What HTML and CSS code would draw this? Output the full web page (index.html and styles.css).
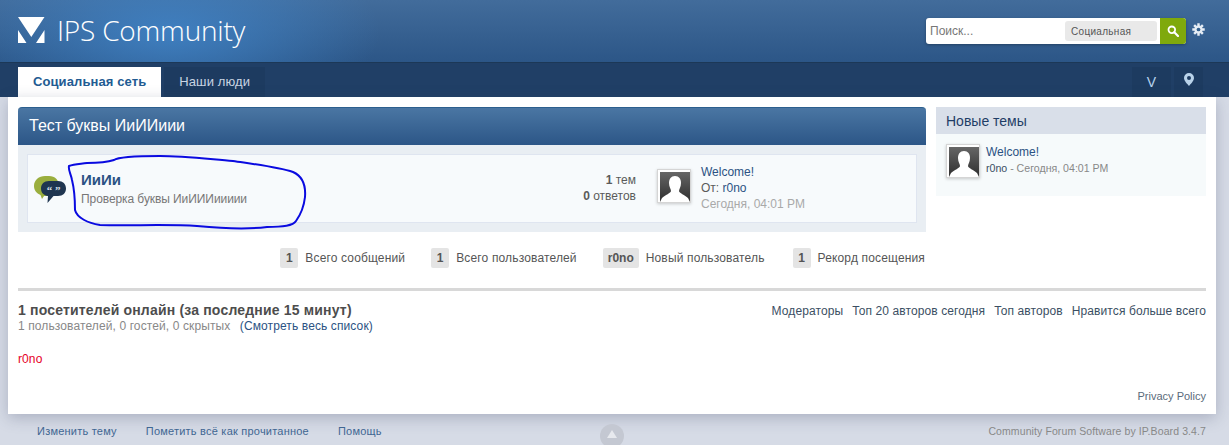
FILE: index.html
```html
<!DOCTYPE html>
<html lang="ru">
<head>
<meta charset="utf-8">
<title>IPS Community</title>
<link rel="stylesheet" href="styles.css">
</head>
<body>
<header class="branding">
  <div class="logo">
    <svg class="logo-mark" width="27" height="26" viewBox="0 0 27 26"><path fill="#fff" d="M0 0H26.500L13.300 20ZM0 13L8.500 26H0ZM26.500 13V26H18Z"/></svg>
    <span class="logo-text">IPS Community</span>
  </div>
  <div class="search-wrap">
    <div class="search">
      <span class="search-input">Поиск...</span>
      <span class="search-scope">Социальная</span>
      <span class="search-btn">
        <svg width="12" height="12" viewBox="0 0 12 12"><circle cx="4.800" cy="4.800" r="3.300" fill="none" stroke="#fff" stroke-width="1.800"/><path d="M7.300 7.300L11 11" stroke="#fff" stroke-width="2.200" stroke-linecap="round"/></svg>
      </span>
    </div>
    <svg class="gear" width="13" height="13" viewBox="0 0 14 14"><circle cx="7" cy="7" r="4.300" fill="#e6edf5"/><path d="M7 .3V13.700M.3 7H13.700M2.300 2.300L11.700 11.700M11.700 2.300L2.300 11.700" stroke="#e6edf5" stroke-width="2.600"/><circle cx="7" cy="7" r="2" fill="#32608f"/></svg>
  </div>
</header>
<nav class="primary-nav">
  <div class="tabs">
    <a class="tab tab-active">Социальная сеть</a>
    <a class="tab">Наши люди</a>
  </div>
  <div class="user-tools">
    <span class="tool tool-user">V</span>
    <span class="tool tool-pin">
      <svg width="10" height="13" viewBox="0 0 10 13"><path fill="#b9d3ea" fill-rule="evenodd" d="M5 0A5 5 0 0 1 10 5C10 8 6.500 11 5 13C3.500 11 0 8 0 5A5 5 0 0 1 5 0ZM5 3A2 2 0 1 0 5 7A2 2 0 1 0 5 3Z"/></svg>
    </span>
  </div>
</nav>
<main class="content">
  <div class="columns">
    <section class="forums">
      <h2 class="cat-title">Тест буквы ИиИИиии</h2>
      <div class="cat-body">
        <div class="forum-row">
          <svg class="forum-icon" width="32" height="28" viewBox="0 0 32 28">
            <path fill="#9aae3e" d="M11 0H15C21 0 25 4 25 10C25 16 21 20 15 20H10L8 23L6.500 19C2.500 17.500 0 14 0 10C0 4 5 0 11 0Z"/>
            <path fill="#1f3550" d="M15 5H24C29 5 32 8 32 12.500C32 17 29 20 24 20H19.500L13.500 27L14 20C10 19.500 7 17 7 12.500C7 8 10 5 15 5Z"/>
            <text class="quote-glyph" x="19.500" y="18" text-anchor="middle">“ ”</text>
          </svg>
          <div class="forum-info">
            <a class="forum-name">ИиИи</a>
            <span class="forum-desc">Проверка буквы ИиИИИиииии</span>
          </div>
          <ul class="forum-stats">
            <li><b>1</b> тем</li>
            <li><b>0</b> ответов</li>
          </ul>
          <span class="avatar avatar-last">
            <svg width="30" height="30" viewBox="0 0 30 30"><use href="#silhouette"/></svg>
          </span>
          <div class="last-post">
            <a class="link">Welcome!</a>
            <span>От: <a class="link">r0no</a></span>
            <span class="muted">Сегодня, 04:01 PM</span>
          </div>
        </div>
      </div>
      <svg class="scribble" width="240" height="76" viewBox="0 0 240 76">
        <path fill="none" stroke="#0a0ae0" stroke-width="2" stroke-linecap="round" d="M1 10C6 8 12 8 19 7C30 7 40 6 46 4C50 1 70 0 92 0C115 0 140 3 165 5C185 8 210 11 225 16C234 20 238 28 237 41C236 50 233 58 228 65C225 70 215 71 199 71C175 74 150 72 129 70C100 68 60 70 32 69C20 67 9 62 7 54C7 44 6 32 4 24C3 18 0 14 1 10Z"/>
      </svg>
    </section>
    <aside class="sidebar">
      <h3 class="side-title">Новые темы</h3>
      <div class="side-body">
        <span class="avatar">
          <svg width="30" height="30" viewBox="0 0 30 30">
            <defs>
              <linearGradient id="ava" x1="0" y1="0" x2="0" y2="1"><stop offset="0" stop-color="#666"/><stop offset="1" stop-color="#2e2e2e"/></linearGradient>
              <g id="silhouette">
                <rect width="30" height="30" fill="url(#ava)"/>
                <path fill="#fff" d="M15 4C19 4 21 7 21 11C21 15 19 17 19 19C19 21 25 23 28 26L30 30H0L2 26C5 23 11 21 11 19C11 17 9 15 9 11C9 7 11 4 15 4Z"/>
              </g>
            </defs>
            <use href="#silhouette"/>
          </svg>
        </span>
        <div class="side-post">
          <a class="link side-link">Welcome!</a>
          <span class="side-meta"><a class="dark-link">r0no</a> - Сегодня, 04:01 PM</span>
        </div>
      </div>
    </aside>
  </div>
  <ul class="stats">
    <li><b class="badge">1</b>Всего сообщений</li>
    <li><b class="badge">1</b>Всего пользователей</li>
    <li><b class="badge">r0no</b>Новый пользователь</li>
    <li><b class="badge">1</b>Рекорд посещения</li>
  </ul>
  <div class="online">
    <div class="online-main">
      <h4 class="online-title">1 посетителей онлайн (за последние 15 минут)</h4>
      <p class="online-sub">1 пользователей, 0 гостей, 0 скрытых <a class="link online-all">(Смотреть весь список)</a></p>
    </div>
    <div class="online-links">
      <a class="dark-link">Модераторы</a>
      <a class="dark-link">Топ 20 авторов сегодня</a>
      <a class="dark-link">Топ авторов</a>
      <a class="dark-link">Нравится больше всего</a>
    </div>
  </div>
  <p class="online-user">r0no</p>
  <p class="privacy">Privacy Policy</p>
</main>
<footer class="page-foot">
  <div class="foot-links">
    <a>Изменить тему</a>
    <a>Пометить всё как прочитанное</a>
    <a>Помощь</a>
  </div>
  <span class="top-btn"></span>
  <span class="copyright">Community Forum Software by IP.Board 3.4.7</span>
</footer>
</body>
</html>
```

FILE: styles.css
```css
* { box-sizing: border-box; }
html, body { height: 445px; overflow: hidden; }
body {
  margin: 0;
  background: #d6dbe6;
  color: #5a5a5a;
  font: 12px/16px "Liberation Sans", Arial, sans-serif;
}
a { text-decoration: none; }
h2, h3, h4, p, ul { margin: 0; padding: 0; list-style: none; font-weight: normal; }

.branding {
  height: 63px;
  padding: 0 24px 0 18px;
  display: flex;
  justify-content: space-between;
  background:
    radial-gradient(ellipse 210px 90px at 170px 32px, rgba(64,132,200,.85), rgba(64,132,200,0) 100%),
    linear-gradient(#426c9b, #2c5687);
  border-bottom: 1px solid #1c3857;
}
.logo { display: flex; align-items: center; height: 62px; }
.logo-mark { margin-bottom: 3px; }
.logo-text {
  margin-left: 12px;
  color: #fff;
  font: 300 28px/34px "Open Sans", sans-serif;
  letter-spacing: -.2px;
  padding-bottom: 2px;
}
.search-wrap { display: flex; align-items: flex-start; padding-top: 18px; }
.search {
  width: 260px;
  height: 26px;
  display: flex;
  align-items: center;
  background: #fff;
  border-radius: 3px;
  box-shadow: 0 1px 3px rgba(0,0,0,.3);
}
.search-input { flex: 1; padding-left: 4px; color: #777; font-size: 12px; }
.search-scope {
  width: 92px;
  height: 20px;
  margin-right: 3px;
  padding-left: 6px;
  background: #e9e9e9;
  border-radius: 3px;
  color: #555;
  font-size: 10px;
  letter-spacing: .3px;
  line-height: 21px;
}
.search-btn {
  width: 26px;
  height: 26px;
  display: flex;
  align-items: center;
  justify-content: center;
  background: #7fa90c;
  border-radius: 0 3px 3px 0;
}
.gear { margin: 5px 0 0 6px; }

.primary-nav {
  height: 34px;
  padding: 4px 26px 0 18px;
  display: flex;
  justify-content: space-between;
  background: #203f66;
}
.tabs, .user-tools { display: flex; }
.tab {
  height: 30px;
  padding: 0 14px;
  color: #c9d5e3;
  font-size: 13px;
  line-height: 29px;
  background: #1d3b60;
}
.tabs .tab + .tab { margin-left: 3px; padding: 0 15px; letter-spacing: .12px; }
.tab-active {
  padding: 0 15px;
  background: #fff;
  color: #225b92;
  font-weight: bold;
  letter-spacing: .1px;
}
.user-tools { gap: 3px; }
.tool {
  height: 30px;
  display: flex;
  align-items: center;
  justify-content: center;
  background: #1d3b60;
}
.tool-user { width: 39px; color: #b5d3ee; font-size: 14px; }
.tool-pin { width: 29px; padding-bottom: 6px; }

.content {
  position: relative;
  width: 1208px;
  height: 317px;
  margin-left: 8px;
  padding: 10px 10px 0;
  background: #fff;
  box-shadow: 0 4px 14px rgba(60,70,100,.28);
}
.columns { display: flex; gap: 10px; align-items: flex-start; }
.forums { position: relative; width: 908px; }
.cat-title {
  height: 38px;
  padding-left: 11px;
  color: #fff;
  font-size: 16px;
  line-height: 36px;
  background: linear-gradient(#4a76a3, #2c5687);
  border-top: 1px solid #2c5f8e;
  border-radius: 4px 4px 0 0;
}
.cat-body { height: 87px; padding: 9px; background: #e9eef3; }
.forum-row {
  height: 69px;
  padding: 0 0 0 6px;
  display: flex;
  align-items: center;
  background: #f7fafc;
  border: 1px solid #dfe5f0;
}
.forum-icon { flex: none; margin-top: 2px; }
.quote-glyph { fill: #d8e0ea; font: bold 11px "Liberation Serif", serif; }
.forum-info { width: 498px; margin-left: 15px; display: flex; flex-direction: column; padding-top: 1px; }
.forum-name { color: #2b5283; font-size: 15px; font-weight: bold; line-height: 18px; }
.forum-desc { margin-top: 2px; color: #777; line-height: 16px; letter-spacing: -.08px; }
.forum-stats { width: 57px; text-align: right; line-height: 16px; padding-bottom: 2px; }
.forum-stats li { white-space: nowrap; }
.avatar {
  flex: none;
  width: 34px;
  height: 34px;
  padding: 2px;
  background: #fff;
  border: 1px solid #d5d5d5;
  box-shadow: 0 1px 3px rgba(0,0,0,.2);
}
.avatar svg { display: block; }
.avatar-last { margin: 0 10px 6px 21px; }
.last-post { display: flex; flex-direction: column; line-height: 16px; padding-bottom: 2px; }
.link { color: #2b5283; }
.muted { color: #a9a9a9; }
.scribble { position: absolute; left: 50px; top: 49px; overflow: visible; pointer-events: none; }

.sidebar { width: 270px; }
.side-title {
  height: 27px;
  padding-left: 10px;
  color: #1f3d66;
  font-size: 14px;
  line-height: 29px;
  background: #d9dfe9;
}
.side-body {
  height: 62px;
  padding: 10px;
  display: flex;
  background: #f6fafb;
}
.side-post { margin-left: 6px; display: flex; flex-direction: column; }
.side-link { line-height: 16px; }
.side-meta { color: #888; font-size: 10.600px; line-height: 16px; }

.stats {
  width: 907px;
  margin-top: 16px;
  display: flex;
  justify-content: flex-end;
  gap: 26px;
  color: #555;
  line-height: 20px;
  letter-spacing: .15px;
}
.stats li { display: flex; white-space: nowrap; }
.stats li:last-child { margin-left: 2px; }
.badge {
  height: 20px;
  min-width: 18px;
  margin-right: 7px;
  padding: 0 5px;
  background: #e4e4e4;
  border-radius: 2px;
  text-align: center;
  letter-spacing: 0;
}
.online {
  margin-top: 20px;
  padding-top: 11px;
  border-top: 3px solid #d8d8d8;
  display: flex;
  justify-content: space-between;
}
.online-title { color: #4d4d4d; font-size: 14px; font-weight: bold; line-height: 16px; letter-spacing: .18px; }
.online-sub { color: #888; line-height: 16px; letter-spacing: .11px; }
.online-all { margin-left: 6px; }
.online-links { display: flex; gap: 9px; padding-top: 1px; letter-spacing: .1px; }
.dark-link { color: #3b4f63; }
.online-user { margin-top: 17px; color: #e6001f; line-height: 16px; letter-spacing: .1px; }
.privacy {
  margin-top: 21px;
  color: #5a6a7a;
  font-size: 11px;
  text-align: right;
}

.page-foot {
  position: relative;
  height: 31px;
  padding: 9px 23px 0 37px;
  display: flex;
  justify-content: space-between;
  font-size: 11px;
  letter-spacing: .22px;
}
.foot-links { display: flex; gap: 29px; }
.foot-links a { color: #3f6692; }
.copyright { color: #888; font-size: 10.500px; letter-spacing: .1px; }
.top-btn {
  position: absolute;
  left: 600px;
  top: 10px;
  width: 24px;
  height: 24px;
  border-radius: 50%;
  background: #c4c8d2;
}
.top-btn::after {
  content: "";
  position: absolute;
  left: 7px;
  top: 6px;
  border: 5px solid transparent;
  border-top: 0;
  border-bottom: 8px solid #e7e9ee;
}
```
